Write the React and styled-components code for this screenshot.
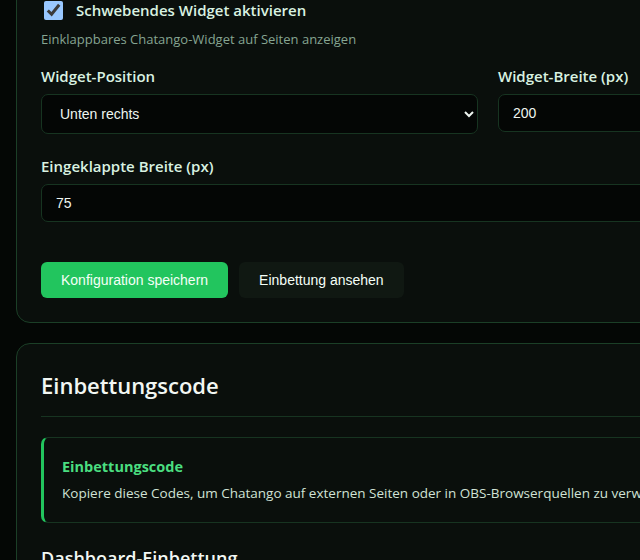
import React from "react";
import styled, { createGlobalStyle } from "styled-components";

const GlobalStyle = createGlobalStyle`
  html, body {
    margin: 0;
    background: #040705;
    color-scheme: dark;
    overflow: hidden;
  }
  body {
    font-family: "Open Sans", "Noto Sans", sans-serif;
  }
`;

const Page = styled.div`
  margin-top: -25px;
  padding-left: 16px;
  display: flex;
  flex-direction: column;
  gap: 20px;
  width: 900px;
`;

const Card = styled.section`
  background: #0a0f0c;
  border: 1px solid #1b3f27;
  border-radius: 14px;
  padding: 24px;
`;

const CheckRow = styled.label`
  display: flex;
  align-items: center;
  gap: 13px;
  padding-left: 3px;
  height: 20px;
  color: #d9f2e1;
  font-size: 15px;
  font-weight: 600;
`;

const Check = styled.input`
  width: 19px;
  height: 19px;
  margin: 0;
  accent-color: #99c8ff;
`;

const Hint = styled.p`
  margin: 10px 0 0;
  font-size: 13px;
  color: #86a592;
`;

const Grid = styled.div`
  display: grid;
  grid-template-columns: ${(p) => p.cols || "1fr"};
  column-gap: 20px;
  margin-top: ${(p) => p.top || 0}px;
`;

const Field = styled.div`
  display: flex;
  flex-direction: column;
  gap: 8px;
`;

const Label = styled.label`
  font-size: 15px;
  font-weight: 600;
  color: #d9f2e1;
`;

const Select = styled.select`
  height: 40px;
  background: #040605;
  border: 1px solid #173421;
  border-radius: 7px;
  color: #eef5f0;
  font-family: "Liberation Sans", Arial, sans-serif;
  font-size: 14px;
  padding: 0 14px;
`;

const Input = styled.input`
  height: 38px;
  box-sizing: border-box;
  background: #040605;
  border: 1px solid #173421;
  border-radius: 7px;
  color: #eef5f0;
  font-family: "Liberation Sans", Arial, sans-serif;
  font-size: 14px;
  padding: 0 14px;
  outline: none;
`;

const Actions = styled.div`
  display: flex;
  gap: 11px;
  margin-top: 40px;
`;

const Button = styled.button`
  height: 36px;
  padding: 0 20px;
  border: none;
  border-radius: 6px;
  font-family: "Liberation Sans", Arial, sans-serif;
  font-size: 14px;
  color: #f4fff7;
  background: ${(p) => (p.primary ? "#22c55e" : "#101812")};
`;

const Heading = styled.h2`
  margin: 2px 0 0;
  font-size: 22px;
  font-weight: 600;
  color: #f2f7f3;
  padding-bottom: 16px;
  border-bottom: 1px solid #173421;
`;

const Note = styled.div`
  margin-top: 20px;
  border: 1px solid #173421;
  border-left: 3px solid #22c55e;
  border-radius: 7px;
  padding: 19px 18px 20px 18px;
`;

const NoteTitle = styled.h4`
  margin: 0;
  font-size: 14.5px;
  font-weight: 700;
  color: #4ade80;
`;

const NoteText = styled.p`
  margin: 8px 0 0;
  font-size: 13.5px;
  color: #d0e2d5;
  white-space: nowrap;
`;

const SubHeading = styled.h3`
  margin: 23px 0 0;
  font-size: 18px;
  font-weight: 600;
  color: #f2f7f3;
`;

export default function App() {
  return (
    <>
      <GlobalStyle />
      <Page>
        <Card>
          <CheckRow>
            <Check type="checkbox" defaultChecked />
            Schwebendes Widget aktivieren
          </CheckRow>
          <Hint>Einklappbares Chatango-Widget auf Seiten anzeigen</Hint>

          <Grid cols="437px 1fr" top={18}>
            <Field>
              <Label>Widget-Position</Label>
              <Select defaultValue="br">
                <option value="br">Unten rechts</option>
                <option value="bl">Unten links</option>
              </Select>
            </Field>
            <Field>
              <Label>Widget-Breite (px)</Label>
              <Input defaultValue="200" />
            </Field>
          </Grid>

          <Grid top={22}>
            <Field>
              <Label>Eingeklappte Breite (px)</Label>
              <Input defaultValue="75" />
            </Field>
          </Grid>

          <Actions>
            <Button primary>Konfiguration speichern</Button>
            <Button>Einbettung ansehen</Button>
          </Actions>
        </Card>

        <Card>
          <Heading>Einbettungscode</Heading>
          <Note>
            <NoteTitle>Einbettungscode</NoteTitle>
            <NoteText>
              Kopiere diese Codes, um Chatango auf externen Seiten oder in OBS-Browserquellen zu verwenden.
            </NoteText>
          </Note>
          <SubHeading>Dashboard-Einbettung</SubHeading>
        </Card>
      </Page>
    </>
  );
}
